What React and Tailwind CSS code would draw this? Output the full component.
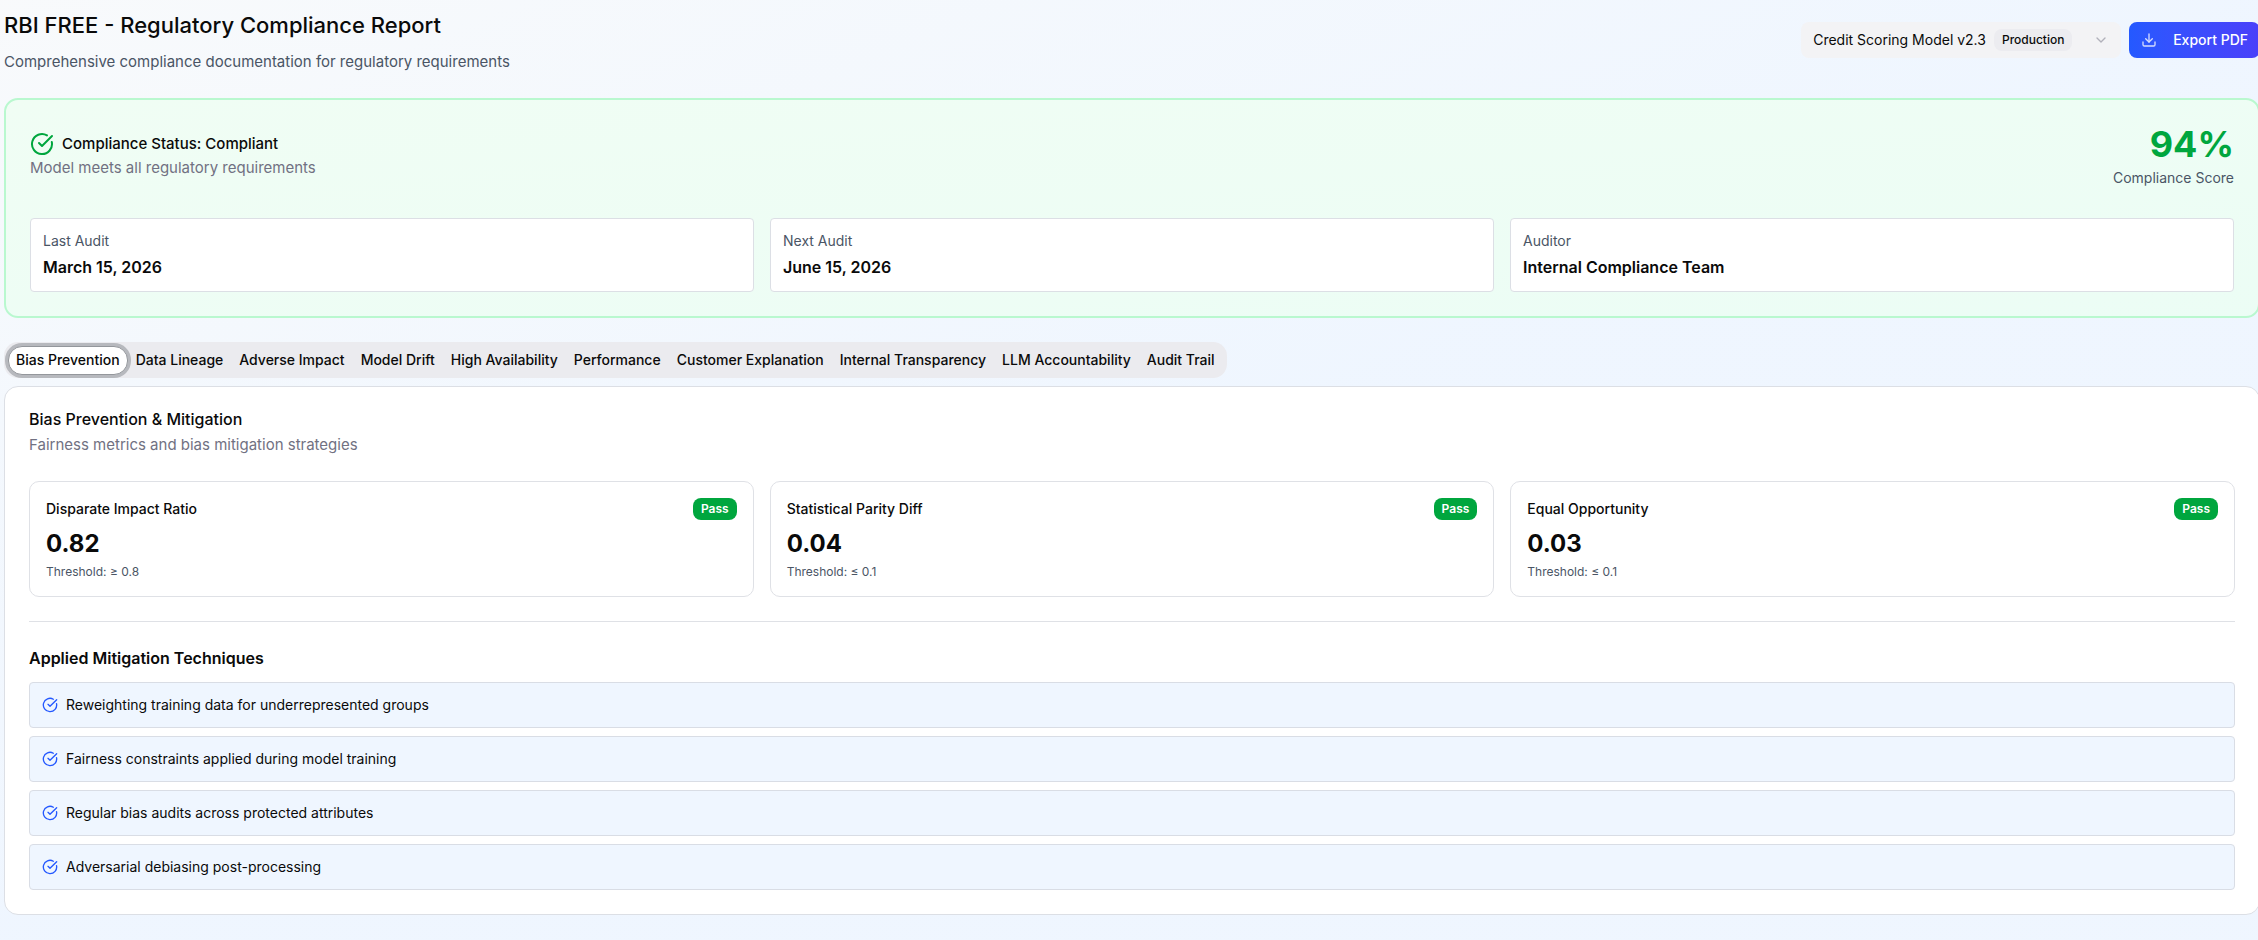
import React, { useState } from "react";
import { ChevronDown, CircleCheckBig, Download } from "lucide-react";

const tabs = [
  "Bias Prevention",
  "Data Lineage",
  "Adverse Impact",
  "Model Drift",
  "High Availability",
  "Performance",
  "Customer Explanation",
  "Internal Transparency",
  "LLM Accountability",
  "Audit Trail",
];

const auditInfo = [
  { label: "Last Audit", value: "March 15, 2026" },
  { label: "Next Audit", value: "June 15, 2026" },
  { label: "Auditor", value: "Internal Compliance Team" },
];

const metrics = [
  { name: "Disparate Impact Ratio", value: "0.82", threshold: "≥ 0.8" },
  { name: "Statistical Parity Diff", value: "0.04", threshold: "≤ 0.1" },
  { name: "Equal Opportunity", value: "0.03", threshold: "≤ 0.1" },
];

const techniques = [
  "Reweighting training data for underrepresented groups",
  "Fairness constraints applied during model training",
  "Regular bias audits across protected attributes",
  "Adversarial debiasing post-processing",
];

const Header = () => {
  return (
    <header className="flex items-center justify-between">
      <div>
        <h1 className="text-[22px] leading-[38px] font-medium">
          RBI FREE - Regulatory Compliance Report
        </h1>
        <p className="mt-1.5 text-[15px] leading-6 text-[#4a5565]">
          Comprehensive compliance documentation for regulatory requirements
        </p>
      </div>
      <div className="flex items-center gap-2">
        <div className="flex h-9 w-80 items-center gap-2 rounded-lg bg-[#f3f3f5] px-3">
          <select
            aria-label="Model"
            className="field-sizing-content appearance-none bg-transparent text-sm outline-none"
          >
            <option>Credit Scoring Model v2.3</option>
          </select>
          <span className="rounded-lg bg-[#ececf0] px-2 py-[3px] text-xs font-medium">
            Production
          </span>
          <ChevronDown className="ml-auto size-4 text-[#717182] opacity-50" />
        </div>
        <button className="flex h-9 items-center gap-4 rounded-lg bg-linear-to-r from-[#2459ff] to-[#4a40fa] px-3 text-sm font-medium text-white">
          <Download className="size-4 opacity-80" />
          Export PDF
        </button>
      </div>
    </header>
  );
};

const ComplianceStatus = () => {
  return (
    <section className="rounded-[14px] border-2 border-[#b9f8cf] bg-linear-to-br from-green-50 to-emerald-50 p-6">
      <div className="flex items-center justify-between">
        <div>
          <h2 className="flex items-center gap-2 text-[15px] leading-6 font-medium">
            <CircleCheckBig className="size-6 text-[#00a63e]" />
            Compliance Status: Compliant
          </h2>
          <p className="text-[15px] leading-6 text-[#717182]">
            Model meets all regulatory requirements
          </p>
        </div>
        <div className="text-right">
          <div className="text-4xl font-bold text-[#00a63e]">94%</div>
          <div className="mt-1 text-sm text-[#4a5565]">Compliance Score</div>
        </div>
      </div>
      <div className="mt-[30px] grid grid-cols-3 gap-4">
        {auditInfo.map((item) => (
          <div
            key={item.label}
            className="rounded border border-[#dcdfe5] bg-white p-3"
          >
            <p className="text-sm text-[#4a5565]">{item.label}</p>
            <p className="mt-1 text-base font-semibold">{item.value}</p>
          </div>
        ))}
      </div>
    </section>
  );
};

const BiasPrevention = () => {
  return (
    <section className="rounded-[14px] border border-[#dcdfe5] bg-white p-6">
      <h3 className="text-base leading-4 font-medium">
        Bias Prevention & Mitigation
      </h3>
      <p className="mt-1.5 text-[15px] leading-6 text-[#717182]">
        Fairness metrics and bias mitigation strategies
      </p>

      <div className="mt-6 grid grid-cols-3 gap-4">
        {metrics.map((m) => (
          <div
            key={m.name}
            className="rounded-[10px] border border-[#dfe1e6] p-4"
          >
            <div className="flex items-center justify-between">
              <span className="text-sm font-medium">{m.name}</span>
              <span className="rounded-lg bg-[#00a63e] px-2 py-[3px] text-xs font-semibold text-white">
                Pass
              </span>
            </div>
            <div className="mt-2 text-2xl font-bold">{m.value}</div>
            <div className="mt-1 text-xs text-[#4a5565]">
              Threshold: {m.threshold}
            </div>
          </div>
        ))}
      </div>

      <hr className="my-6 border-[#dfe1e6]" />

      <h4 className="text-base font-semibold">Applied Mitigation Techniques</h4>
      <ul className="mt-3 flex flex-col gap-2">
        {techniques.map((t) => (
          <li
            key={t}
            className="flex items-center gap-2 rounded border border-[#d9dde5] bg-blue-50 p-3 text-sm"
          >
            <CircleCheckBig className="size-4 text-[#2458ff]" />
            {t}
          </li>
        ))}
      </ul>
    </section>
  );
};

const App = () => {
  const [active, setActive] = useState("Bias Prevention");

  return (
    <div className="min-h-screen overflow-hidden bg-linear-to-br from-slate-50 via-blue-50 to-blue-50 pt-1.5 pb-6 pl-1 font-['Inter',sans-serif] text-[#0a0a0a]">
      <main className="-mr-0.5 flex flex-col gap-6">
        <Header />
        <ComplianceStatus />
        <div className="flex flex-col items-start gap-2">
          <div
            role="tablist"
            className="flex h-9 items-center rounded-[14px] bg-[#ebebef] px-1"
          >
            {tabs.map((tab) => (
              <button
                key={tab}
                role="tab"
                aria-selected={active === tab}
                onClick={() => setActive(tab)}
                className={
                  "h-[29px] rounded-[14px] border px-[7px] text-sm font-medium whitespace-nowrap " +
                  (active === tab
                    ? "border-[#94979c] bg-white ring-[3px] ring-[#94979c]/60"
                    : "border-transparent")
                }
              >
                {tab}
              </button>
            ))}
          </div>
          <div className="w-full">
            <BiasPrevention />
          </div>
        </div>
      </main>
    </div>
  );
};

export default App;
